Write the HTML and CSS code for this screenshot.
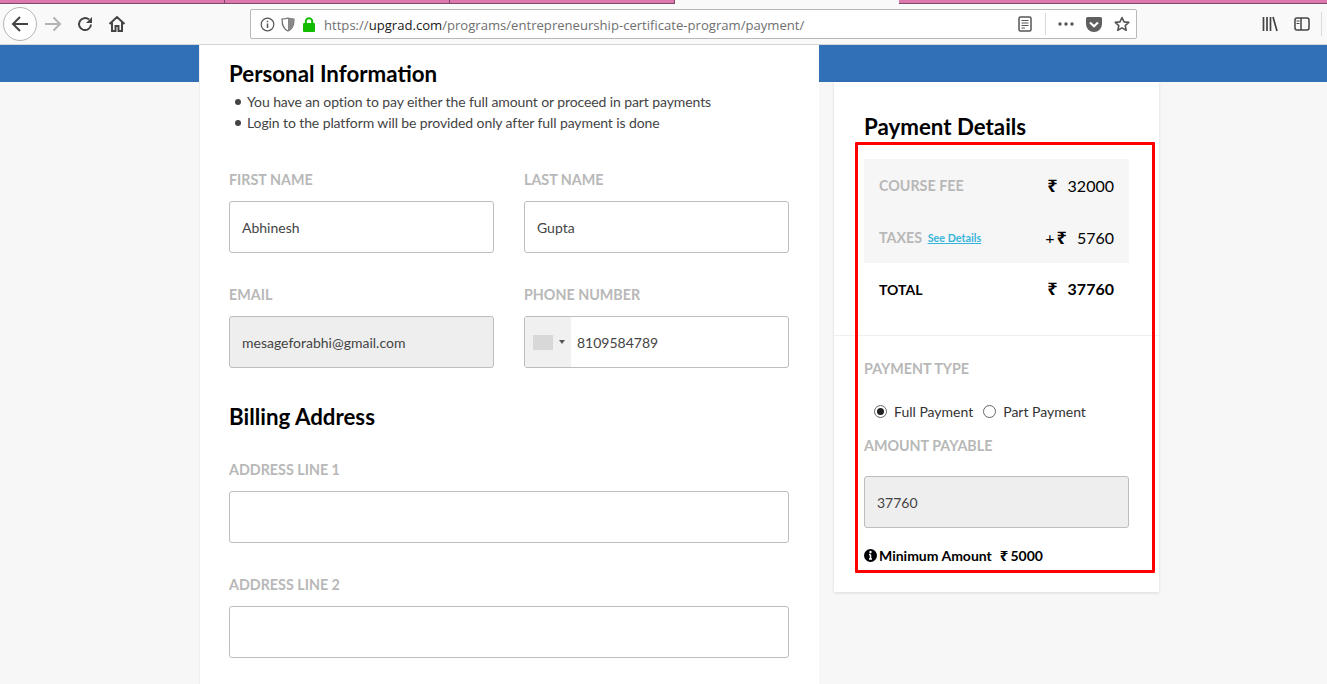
FILE: index.html
```html
<!DOCTYPE html>
<html lang="en">
<head>
<meta charset="utf-8">
<title>upGrad payment</title>
<link rel="stylesheet" href="styles.css">
</head>
<body>
<div class="tabs">
  <div class="tab t1"></div><div class="tab t2"></div><div class="tab t3"></div><div class="tab active"></div><div class="tab t5"></div>
</div>
<header class="toolbar">
  <div class="back">
    <svg width="20" height="20" viewBox="0 0 20 20"><path d="M18 10H3M10 3l-7 7 7 7" fill="none" stroke="#444" stroke-width="2"/></svg>
  </div>
  <svg class="fwd" width="18" height="18" viewBox="0 0 18 18"><path d="M1 9h15M9.500 2.500 16 9l-6.500 6.500" fill="none" stroke="#b3b3b3" stroke-width="2"/></svg>
  <svg class="reload" width="16" height="16" viewBox="0 0 16 16"><path d="M14 8.500A6 6 0 1 1 12 3.600" fill="none" stroke="#444" stroke-width="2"/><path d="M15 1v6H9z" fill="#444"/></svg>
  <svg class="home" width="18" height="18" viewBox="0 0 18 18"><path d="M1.500 9 9 2l7.500 7M4 7.500V16h3.500v-5h3v5H14V7.500" fill="none" stroke="#444" stroke-width="2"/></svg>
  <div class="urlbar">
    <svg class="u-info" width="15" height="15" viewBox="0 0 15 15"><circle cx="7.500" cy="7.500" r="6.300" fill="none" stroke="#555" stroke-width="1.200"/><path d="M7.500 6.500v4.500M7.500 3.800v1.400" stroke="#555" stroke-width="1.500"/></svg>
    <svg class="u-shield" width="14" height="15" viewBox="0 0 14 15"><path d="M7 1C5 2 3 2 1 2c0 6 1 10 6 12 5-2 6-6 6-12-2 0-4 0-6-1z" fill="#fff" stroke="#666" stroke-width="1.200"/><path d="M7 1c2 1 4 1 6 1 0 6-1 10-6 12z" fill="#888"/></svg>
    <svg class="u-lock" width="14" height="15" viewBox="0 0 14 15"><rect x="1" y="6" width="12" height="9" rx="1" fill="#12bc00"/><path d="M3.800 7V4.500a3.200 3.200 0 0 1 6.400 0V7" fill="none" stroke="#12bc00" stroke-width="2"/></svg>
    <div class="url"><span class="dim">https://</span>upgrad.com<span class="dim">/programs/entrepreneurship-certificate-program/payment/</span></div>
    <svg class="u-reader" width="14" height="16" viewBox="0 0 14 16"><rect x="1" y="1" width="12" height="14" rx="1.500" fill="none" stroke="#555" stroke-width="1.500"/><path d="M3.500 4.500h7M3.500 7h7M3.500 9.500h7M3.500 12h3.500" stroke="#555"/></svg>
    <span class="u-sep"></span>
    <svg class="u-more" width="16" height="4" viewBox="0 0 16 4"><circle cx="2" cy="2" r="1.700" fill="#555"/><circle cx="8" cy="2" r="1.700" fill="#555"/><circle cx="14" cy="2" r="1.700" fill="#555"/></svg>
    <svg class="u-pocket" width="16" height="15" viewBox="0 0 16 15"><path d="M1.500 0h13A1.500 1.500 0 0 1 16 1.500V7A8 8 0 0 1 0 7V1.500A1.500 1.500 0 0 1 1.500 0z" fill="#5f5f5f"/><path d="m4 5.500 4 3.700 4-3.700" fill="none" stroke="#fff" stroke-width="2.200"/></svg>
    <svg class="u-star" width="16" height="16" viewBox="0 0 16 16"><path d="m8 1.500 2 4.400 4.800.5-3.600 3.200 1 4.700L8 11.900l-4.200 2.400 1-4.700L1.200 6.400 6 5.900z" fill="none" stroke="#555" stroke-width="1.600" stroke-linejoin="round"/></svg>
  </div>
  <svg class="library" width="16" height="16" viewBox="0 0 16 16"><path d="M1.500 1v14M5 1v14M8.500 1v14M11 1l4 14" stroke="#444" stroke-width="1.700" fill="none"/></svg>
  <svg class="sidebar" width="16" height="14" viewBox="0 0 16 14"><rect x="1" y="1" width="14" height="12" rx="2" fill="none" stroke="#444" stroke-width="1.500"/><path d="M7 1v12" stroke="#444" stroke-width="1.500"/><path d="M2.500 4h3M2.500 6.500h3" stroke="#444"/></svg>
  <span class="end-sep"></span>
</header>
<main class="page">
  <section class="form-card">
    <h2 class="title">Personal Information</h2>
    <ul class="notes">
      <li>You have an option to pay either the full amount or proceed in part payments</li>
      <li>Login to the platform will be provided only after full payment is done</li>
    </ul>
    <div class="grid first">
      <div class="field"><label class="lbl">FIRST NAME</label><div class="input">Abhinesh</div></div>
      <div class="field"><label class="lbl">LAST NAME</label><div class="input">Gupta</div></div>
      <div class="field"><label class="lbl">EMAIL</label><div class="input disabled">mesageforabhi@gmail.com</div></div>
      <div class="field"><label class="lbl">PHONE NUMBER</label>
        <div class="input phone"><span class="flag"><i class="swatch"></i><i class="caret"></i></span><span>8109584789</span></div>
      </div>
    </div>
    <h2 class="title billing">Billing Address</h2>
    <div class="field wide first-addr"><label class="lbl">ADDRESS LINE 1</label><div class="input tall"></div></div>
    <div class="field wide"><label class="lbl">ADDRESS LINE 2</label><div class="input tall"></div></div>
  </section>
  <aside class="pay-card">
    <h2 class="title pay-title">Payment Details</h2>
    <div class="fees">
      <div class="row"><span class="lbl">COURSE FEE</span><span class="amt"><span class="rs">₹</span>32000</span></div>
      <div class="row r2"><span class="lbl">TAXES <a class="see" href="#">See Details</a></span><span class="amt">+<span class="rs plus">₹</span>5760</span></div>
    </div>
    <div class="row total"><span>TOTAL</span><span class="amt strong"><span class="rs">₹</span>37760</span></div>
    <div class="pay-lower">
      <div class="lbl">PAYMENT TYPE</div>
      <div class="radios">
        <span class="radio on"></span><span class="r-text">Full Payment</span>
        <span class="radio"></span><span class="r-text">Part Payment</span>
      </div>
      <div class="lbl">AMOUNT PAYABLE</div>
      <div class="input disabled amount">37760</div>
      <div class="min">
        <svg width="13" height="13" viewBox="0 0 13 13"><circle cx="6.500" cy="6.500" r="6.500" fill="#000"/><path d="M6.500 5.500V10M5 10h3M5 5.500h1.500" stroke="#fff" stroke-width="1.500" fill="none"/><circle cx="6.500" cy="3" r="1.200" fill="#fff"/></svg>
        <span>Minimum Amount</span><span class="min-amt"><span class="rs-s">₹</span>5000</span>
      </div>
    </div>
    <div class="redbox"></div>
  </aside>
</main>
</body>
</html>
```

FILE: styles.css
```css
* { box-sizing: border-box; }
html, body { margin: 0; height: 684px; overflow: hidden; }
body { font-family: Lato, "Liberation Sans", sans-serif; background: #f7f7f7; color: #000; display: flex; flex-direction: column; }

.tabs { height: 4px; display: flex; background: #dd78ae; border-bottom: 1px solid #7a4a66; flex: none; }
.tab { height: 3px; border-right: 1px solid #7a4a66; }
.t1 { width: 225px; }
.t2 { width: 225px; }
.t3 { width: 225px; }
.active { width: 224px; height: 4px; background: #f9f9fa; border-right: none; }
.t5 { flex: 1; border-right: none; }

.toolbar { height: 41px; flex: none; display: flex; align-items: center; background: #f9f9fa; border-bottom: 1px solid #d6d6d6; position: relative; }
.back { width: 34px; height: 34px; margin-left: 3px; border: 1px solid #b5b5b5; border-radius: 50%; background: #fff; display: flex; align-items: center; justify-content: center; flex: none; }
.fwd { margin-left: 7px; flex: none; }
.reload { margin-left: 15px; flex: none; }
.home { margin-left: 15px; flex: none; }
.urlbar { width: 887px; height: 30px; margin-left: 124px; background: #fff; border: 1px solid #b8b8b8; border-radius: 2px; display: flex; align-items: center; flex: none; }
.u-info { margin-left: 9px; flex: none; }
.u-shield { margin-left: 6px; flex: none; }
.u-lock { margin-left: 7px; flex: none; }
.url { margin: 1px 0 0 8px; font-family: "Open Sans", "Liberation Sans", sans-serif; font-size: 13.1px; color: #1a1a1a; white-space: nowrap; flex: 1; }
.dim { color: #6f6f6f; }
.u-reader { flex: none; }
.u-sep { width: 1px; height: 22px; background: #d9d9d9; margin: 0 12px 0 13px; flex: none; }
.u-more { flex: none; }
.u-pocket { margin-left: 12px; flex: none; }
.u-star { margin-left: 12px; margin-right: 6px; flex: none; }
.library { margin-left: 125px; flex: none; }
.sidebar { margin-left: 16px; flex: none; }
.end-sep { width: 1px; height: 24px; background: #dcdcdc; margin-left: 11px; flex: none; }

.page { flex: 1; display: flex; align-items: flex-start; padding-left: 199px; background: linear-gradient(#316fb7 37px, #f7f7f7 37px); min-height: 0; }
.form-card { width: 620px; align-self: stretch; background: #fff; padding: 17px 30px 0 29px; border-left: 1px solid #efefef; flex: none; }
.title { margin: 0; font-size: 22.3px; font-weight: 700; line-height: 24px; color: #000; }
.notes { margin: 5px 0 0; padding: 0 0 0 6px; list-style: none; font-size: 14px; letter-spacing: -0.1px; line-height: 21px; color: #444; }
.notes li { display: flex; align-items: center; }
.notes li::before { content: ""; width: 6px; height: 6px; border-radius: 50%; background: #444; margin-right: 6px; flex: none; }
.grid { display: grid; grid-template-columns: 265px 265px; column-gap: 30px; row-gap: 33px; }
.grid.first { margin-top: 38px; }
.field { display: flex; flex-direction: column; }
.lbl { font-size: 14.3px; font-weight: 700; line-height: 17px; color: #b8b8b8; }
.input { height: 52px; margin-top: 13px; border: 1px solid #bdbdbd; border-radius: 3px; background: #fff; padding: 0 12px; display: flex; align-items: center; font-size: 14px; color: #444; }
.disabled { background: #eee; }
.phone { padding: 0; overflow: hidden; }
.flag { width: 46px; height: 100%; background: #f0f0f0; display: flex; align-items: center; padding-left: 8px; margin-right: 6px; flex: none; }
.swatch { width: 20px; height: 15px; background: #d8d8d8; display: block; }
.caret { width: 0; height: 0; border: 3px solid transparent; border-top: 4px solid #555; border-bottom: 0; margin-left: 6px; display: block; }
.billing { margin-top: 37px; }
.wide { width: 560px; margin-bottom: 33px; }
.wide:last-child { margin-bottom: 0; }
.first-addr { margin-top: 32px; }

.pay-card { width: 325px; height: 510px; margin: 37px 0 0 15px; background: #fff; box-shadow: 0 1px 3px rgba(0,0,0,.12); position: relative; flex: none; padding-top: 33px; }
.pay-title { margin-left: 30px; }
.fees { margin: 20px 0 0 30px; width: 265px; height: 104px; background: #f6f6f6; }
.row { display: flex; justify-content: space-between; align-items: center; height: 52px; padding: 0 15px; }
.row .lbl { white-space: nowrap; }
.amt { font-size: 16px; color: #000; display: flex; align-items: center; }
.strong { font-weight: 700; margin-bottom: 2px; }
.rs { font-family: "Noto Sans", "DejaVu Sans", sans-serif; font-size: 18px; font-weight: 700; line-height: 20px; margin-right: 10px; }
.rs.plus { margin-left: 2px; margin-right: 10px; }
.see { font-size: 10.8px; font-weight: 700; color: #39b5dc; text-decoration: underline; margin-left: 2px; vertical-align: 1px; }
.total { margin-left: 30px; width: 265px; font-size: 14px; font-weight: 700; color: #000; }
.pay-lower { margin-top: 20px; border-top: 1px solid #efefef; padding: 24px 30px 0; }
.radios { display: flex; align-items: center; margin: 24px 0 0 10px; height: 20px; font-size: 14px; color: #333; }
.radio { width: 13px; height: 13px; border: 1px solid #666; border-radius: 50%; background: #fff; flex: none; position: relative; margin-right: 7px; }
.radio.on::after { content: ""; position: absolute; left: 2px; top: 2px; width: 7px; height: 7px; border-radius: 50%; background: #222; }
.r-text { margin-right: 10px; }
.radios + .lbl { margin-top: 16px; }
.amount { width: 265px; margin-top: 22px; }
.min { display: flex; align-items: center; margin-top: 17px; font-size: 14px; font-weight: 700; color: #000; }
.min svg { margin-right: 2px; flex: none; }
.min-amt { margin-left: 8px; }
.rs-s { font-family: "Noto Sans", "DejaVu Sans", sans-serif; font-size: 15px; margin-right: 2px; }
.redbox { position: absolute; left: 21px; top: 60px; width: 300px; height: 431px; border: 3px solid #f00; border-radius: 1px; pointer-events: none; }
```
